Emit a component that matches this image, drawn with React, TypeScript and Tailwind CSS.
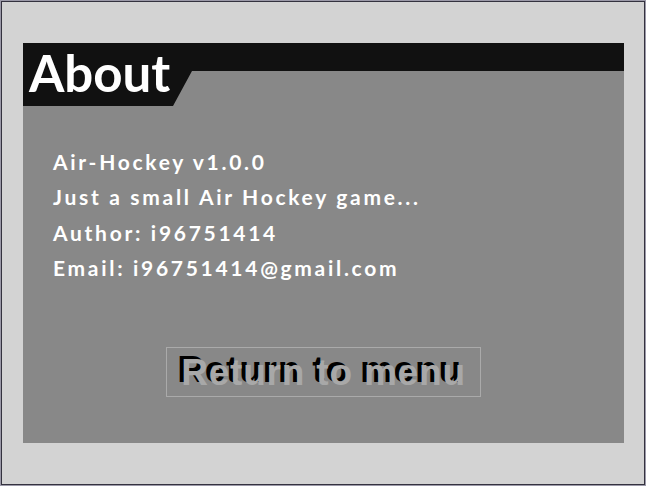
const App = () => {
  return (
    <div className="w-[646px] h-[486px] border border-[#9b99a8] bg-[#d3d3d3]">
      <div className="w-full h-full border border-[#34323f] pl-[21px] pr-[20px] pt-[41px]">
        <div className="h-[400px] bg-[#888888] flex flex-col">
          <div className="h-[63px] bg-[#111111] [clip-path:polygon(0_0,100%_0,100%_28px,169px_28px,150px_63px,0_63px)]">
            <h1 className="pl-[6px] pt-[1px] text-[51px] leading-[58px] font-bold text-white font-['Lato',sans-serif]">
              About
            </h1>
          </div>
          <div className="pl-[30px] pt-[38px] flex flex-col text-[21px] leading-[35.3px] font-bold tracking-[2.7px] text-white font-['Lato',sans-serif]">
            <p>Air-Hockey v1.0.0</p>
            <p>Just a small Air Hockey game...</p>
            <p>Author: i96751414</p>
            <p>Email: i96751414@gmail.com</p>
          </div>
          <div className="flex justify-center pt-[62px]">
            <button className="w-[315px] h-[50px] border border-[#aaaaaa] flex items-center justify-center pt-[2px] text-[37px] font-bold text-[#a8a8a8] tracking-[0.8px] font-['Liberation_Sans',sans-serif] [text-shadow:-4px_-3px_0_#000]">
              Return to menu
            </button>
          </div>
        </div>
      </div>
    </div>
  );
};

export default App;
